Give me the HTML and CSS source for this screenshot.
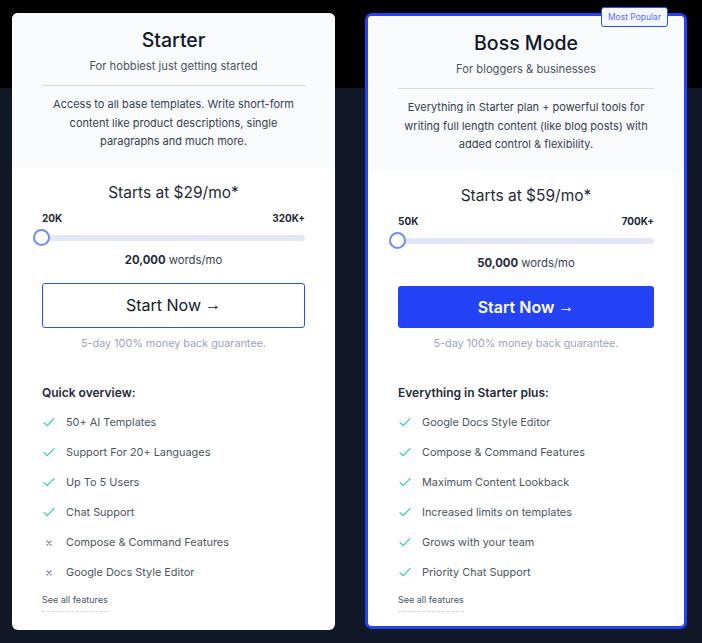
FILE: index.html
```html
<!DOCTYPE html>
<html>
<head>
<meta charset="utf-8">
<link rel="stylesheet" href="styles.css">
</head>
<body>
<div class="wrap">
  <div class="card">
    <div class="head">
      <h2 class="title">Starter</h2>
      <p class="sub">For hobbiest just getting started</p>
      <p class="desc">Access to all base templates. Write short-form content like product descriptions, single paragraphs and much more.</p>
    </div>
    <div class="body">
      <div class="price">Starts at $29/mo*</div>
      <div class="labels"><span>20K</span><span>320K+</span></div>
      <div class="track"><span class="thumb"></span></div>
      <div class="words"><b>20,000</b> words/mo</div>
      <a class="btn btn-outline">Start Now <span class="arrow">→</span></a>
      <div class="guarantee">5-day 100% money back guarantee.</div>
      <div class="list-title">Quick overview:</div>
      <ul class="list">
        <li><span class="ic"><svg width="12" height="10" viewBox="0 0 12 10"><path d="M1 5.6 L4.2 8.6 L11 1.6" fill="none" stroke="#34d399" stroke-width="1.3" stroke-linecap="round" stroke-linejoin="round"/></svg></span>50+ AI Templates</li>
        <li><span class="ic"><svg width="12" height="10" viewBox="0 0 12 10"><path d="M1 5.6 L4.2 8.6 L11 1.6" fill="none" stroke="#34d399" stroke-width="1.3" stroke-linecap="round" stroke-linejoin="round"/></svg></span>Support For 20+ Languages</li>
        <li><span class="ic"><svg width="12" height="10" viewBox="0 0 12 10"><path d="M1 5.6 L4.2 8.6 L11 1.6" fill="none" stroke="#34d399" stroke-width="1.3" stroke-linecap="round" stroke-linejoin="round"/></svg></span>Up To 5 Users</li>
        <li><span class="ic"><svg width="12" height="10" viewBox="0 0 12 10"><path d="M1 5.6 L4.2 8.6 L11 1.6" fill="none" stroke="#34d399" stroke-width="1.3" stroke-linecap="round" stroke-linejoin="round"/></svg></span>Chat Support</li>
        <li><span class="ic x"><svg width="6" height="6" viewBox="0 0 6 6"><path d="M1 1 L5 5 M5 1 L1 5" stroke="#7c86b4" stroke-width="1.2" stroke-linecap="round"/></svg></span>Compose &amp; Command Features</li>
        <li><span class="ic x"><svg width="6" height="6" viewBox="0 0 6 6"><path d="M1 1 L5 5 M5 1 L1 5" stroke="#7c86b4" stroke-width="1.2" stroke-linecap="round"/></svg></span>Google Docs Style Editor</li>
      </ul>
      <a class="see">See all features</a>
    </div>
  </div>

  <div class="card popular">
    <span class="badge">Most Popular</span>
    <div class="head">
      <h2 class="title">Boss Mode</h2>
      <p class="sub">For bloggers &amp; businesses</p>
      <p class="desc">Everything in Starter plan + powerful tools for writing full length content (like blog posts) with added control &amp; flexibility.</p>
    </div>
    <div class="body">
      <div class="price">Starts at $59/mo*</div>
      <div class="labels"><span>50K</span><span>700K+</span></div>
      <div class="track"><span class="thumb"></span></div>
      <div class="words"><b>50,000</b> words/mo</div>
      <a class="btn btn-solid">Start Now <span class="arrow">→</span></a>
      <div class="guarantee">5-day 100% money back guarantee.</div>
      <div class="list-title">Everything in Starter plus:</div>
      <ul class="list">
        <li><span class="ic"><svg width="12" height="10" viewBox="0 0 12 10"><path d="M1 5.6 L4.2 8.6 L11 1.6" fill="none" stroke="#34d399" stroke-width="1.3" stroke-linecap="round" stroke-linejoin="round"/></svg></span>Google Docs Style Editor</li>
        <li><span class="ic"><svg width="12" height="10" viewBox="0 0 12 10"><path d="M1 5.6 L4.2 8.6 L11 1.6" fill="none" stroke="#34d399" stroke-width="1.3" stroke-linecap="round" stroke-linejoin="round"/></svg></span>Compose &amp; Command Features</li>
        <li><span class="ic"><svg width="12" height="10" viewBox="0 0 12 10"><path d="M1 5.6 L4.2 8.6 L11 1.6" fill="none" stroke="#34d399" stroke-width="1.3" stroke-linecap="round" stroke-linejoin="round"/></svg></span>Maximum Content Lookback</li>
        <li><span class="ic"><svg width="12" height="10" viewBox="0 0 12 10"><path d="M1 5.6 L4.2 8.6 L11 1.6" fill="none" stroke="#34d399" stroke-width="1.3" stroke-linecap="round" stroke-linejoin="round"/></svg></span>Increased limits on templates</li>
        <li><span class="ic"><svg width="12" height="10" viewBox="0 0 12 10"><path d="M1 5.6 L4.2 8.6 L11 1.6" fill="none" stroke="#34d399" stroke-width="1.3" stroke-linecap="round" stroke-linejoin="round"/></svg></span>Grows with your team</li>
        <li><span class="ic"><svg width="12" height="10" viewBox="0 0 12 10"><path d="M1 5.6 L4.2 8.6 L11 1.6" fill="none" stroke="#34d399" stroke-width="1.3" stroke-linecap="round" stroke-linejoin="round"/></svg></span>Priority Chat Support</li>
      </ul>
      <a class="see">See all features</a>
    </div>
  </div>
</div>
</body>
</html>
```

FILE: styles.css
```css
* { box-sizing: border-box; }
html, body { margin: 0; padding: 0; }
body {
  width: 702px;
  height: 643px;
  overflow: hidden;
  font-family: Inter, "Noto Sans", "Liberation Sans", sans-serif;
  background: linear-gradient(to bottom, #000 0, #000 88px, #111827 88px, #111827 100%);
  color: #1f2937;
}
.wrap {
  display: flex;
  gap: 30px;
  padding: 13px 0 0 12px;
}
.card {
  position: relative;
  width: 323px;
  height: 617px;
  background: #fff;
  border-radius: 6px;
}
.card.popular {
  width: 322px;
  height: 616px;
  border: 3px solid #2443f5;
  border-radius: 7px;
}
.head {
  background: #f8fafc;
  padding: 13px 30px 17px;
  text-align: center;
  border-radius: 6px 6px 0 0;
}
.popular .head { border-radius: 4px 4px 0 0; }
.title {
  margin: 0;
  font-size: 19.5px;
  line-height: 28px;
  font-weight: 500;
  color: #111827;
}
.sub {
  margin: 3px 0 0;
  font-size: 11.2px;
  line-height: 18px;
  color: #4b5563;
  padding-bottom: 10px;
  border-bottom: 1px solid #cfd8e3;
}
.desc {
  margin: 9px 0 0;
  font-size: 11px;
  line-height: 18.5px;
  color: #374151;
}
.body {
  padding: 13px 30px 0;
}
.price {
  text-align: center;
  font-size: 15.5px;
  line-height: 24px;
  color: #1f2937;
}
.labels {
  display: flex;
  justify-content: space-between;
  margin-top: 6px;
  font-size: 10px;
  line-height: 14px;
  font-weight: 700;
  color: #1f2937;
}
.track {
  position: relative;
  height: 6px;
  margin-top: 10px;
  border-radius: 3px;
  background: #e1e7f6;
}
.thumb {
  position: absolute;
  left: -9px;
  top: -5.5px;
  width: 17px;
  height: 17px;
  border-radius: 50%;
  background: #fff;
  border: 2px solid #6f8cf6;
}
.words {
  margin-top: 10px;
  text-align: center;
  font-size: 11.3px;
  line-height: 18px;
  color: #374151;
}
.words b { font-weight: 700; color: #1f2937; }
.btn {
  display: flex;
  align-items: center;
  justify-content: center;
  gap: 4px;
  margin-top: 14px;
  height: 45px;
  border-radius: 3px;
  font-size: 16px;
  text-decoration: none;
}
.arrow {
  font-family: "Liberation Sans", sans-serif;
  font-weight: 400;
}
.btn-outline {
  border: 1px solid #2d4ef5;
  color: #111827;
}
.btn-solid {
  height: 42px;
  background: #2443f5;
  color: #fff;
  font-weight: 600;
}
.guarantee {
  margin-top: 7px;
  text-align: center;
  font-size: 10.8px;
  line-height: 18px;
  color: #9ca3b8;
}
.list-title {
  margin-top: 30px;
  font-size: 12px;
  line-height: 20px;
  font-weight: 600;
  color: #1f2937;
}
.list {
  list-style: none;
  margin: 4px 0 0;
  padding: 0;
}
.list li {
  display: flex;
  align-items: center;
  height: 30px;
  font-size: 10.9px;
  color: #4b5563;
}
.ic {
  width: 24px;
  flex: none;
  display: flex;
  align-items: center;
  padding-left: 1px;
  padding-top: 1px;
}
.ic.x { padding-left: 4px; padding-top: 2px; }
.see {
  display: inline-block;
  margin-top: 5px;
  font-size: 9px;
  line-height: 14px;
  color: #4b5563;
  padding-bottom: 4px;
  border-bottom: 1px dashed #cbd5e1;
}
.badge {
  position: absolute;
  top: -9px;
  right: 16px;
  width: 67px;
  height: 20px;
  display: flex;
  align-items: center;
  justify-content: center;
  font-size: 8.5px;
  color: #5f6df0;
  background: #f5f7ff;
  border: 1px solid #2d4ef5;
  border-radius: 3px;
}
```
